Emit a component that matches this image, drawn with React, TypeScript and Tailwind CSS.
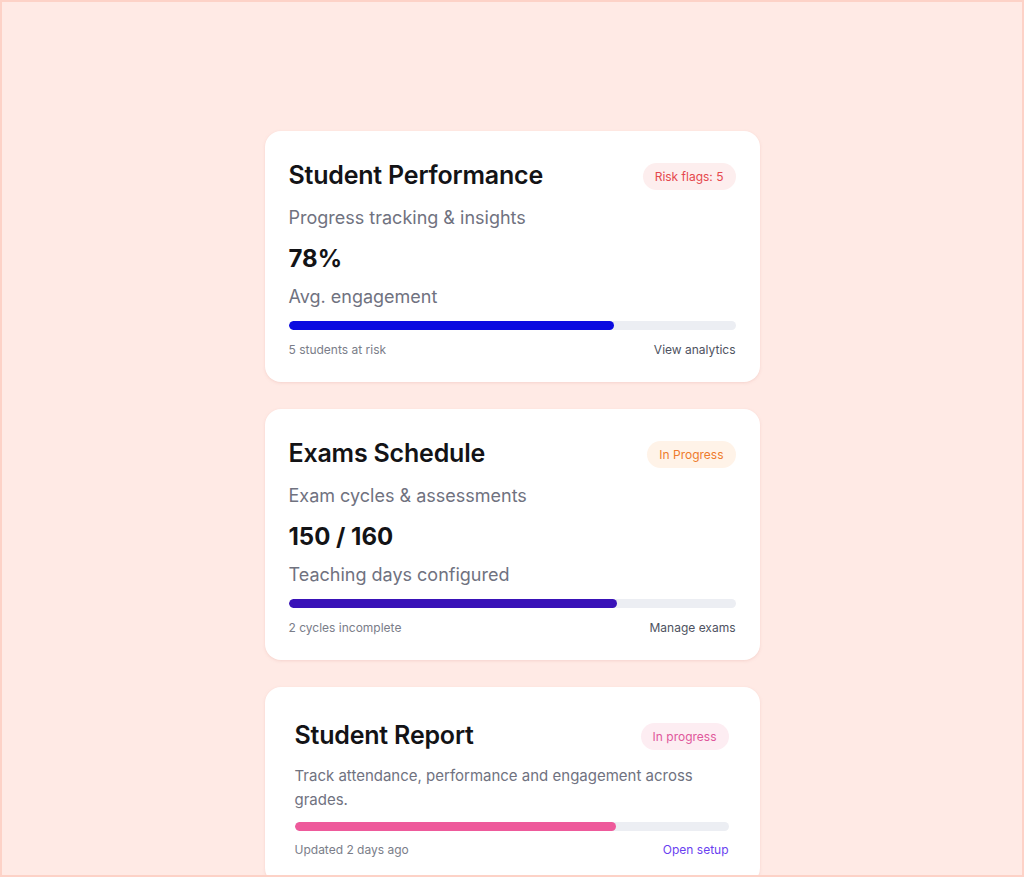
const StatusPill = ({label, tone}: {label: string; tone: string}) => (
    <span className={`h-[27px] px-3 rounded-full text-[12px] leading-[27px] whitespace-nowrap ${tone}`}>
        {label}
    </span>
);

const Bar = ({pct, fill}: {pct: number; fill: string}) => (
    <div className="h-[9px] w-full rounded-full bg-[#eceef3] overflow-hidden">
        <div className={`h-full rounded-full ${fill}`} style={{width: `${pct}%`}}/>
    </div>
);

const MetricCard = ({
                        title,
                        badge,
                        badgeTone,
                        subtitle,
                        value,
                        caption,
                        pct,
                        fill,
                        footLeft,
                        footRight,
                    }: {
    title: string;
    badge: string;
    badgeTone: string;
    subtitle: string;
    value: string;
    caption: string;
    pct: number;
    fill: string;
    footLeft: string;
    footRight: string;
}) => (
    <div className="w-[495px] rounded-2xl bg-white px-6 pt-[25px] pb-[22px] shadow-[0_1px_3px_rgba(226,170,160,0.35)]">
        <div className="flex h-10 items-center justify-between">
            <h2 className="text-[25px] font-semibold text-[#131316] tracking-[-0.2px]">{title}</h2>
            <StatusPill label={badge} tone={badgeTone}/>
        </div>
        <div className="mt-2 text-[18px] leading-7 text-[#70727f]">{subtitle}</div>
        <div className="mt-[11px] text-[24px] leading-8 font-bold text-[#131316]">{value}</div>
        <div className="mt-2 text-[18px] leading-7 text-[#70727f]">{caption}</div>
        <div className="mt-[10px]">
            <Bar pct={72.8 === pct ? pct : pct} fill={fill}/>
        </div>
        <div className="mt-[10px] flex justify-between text-[12px] leading-5">
            <span className="text-[#7a7d89]">{footLeft}</span>
            <span className="text-[#4e5261]">{footRight}</span>
        </div>
    </div>
);

export default function App() {
    return (
        <div
            className="h-[877px] w-full overflow-hidden border-2 border-[#fdd2c7] bg-[#ffeae5] flex flex-col items-center gap-[27px] pt-[129px]"
            style={{fontFamily: "Inter, 'Noto Sans', sans-serif"}}
        >
            <MetricCard
                title="Student Performance"
                badge="Risk flags: 5"
                badgeTone="bg-[#fdeeee] text-[#e5484d]"
                subtitle="Progress tracking & insights"
                value="78%"
                caption="Avg. engagement"
                pct={72.8}
                fill="bg-[#0b0be0]"
                footLeft="5 students at risk"
                footRight="View analytics"
            />
            <MetricCard
                title="Exams Schedule"
                badge="In Progress"
                badgeTone="bg-[#fff3e8] text-[#ee7b2c]"
                subtitle="Exam cycles & assessments"
                value="150 / 160"
                caption="Teaching days configured"
                pct={73.4}
                fill="bg-[#3912b8]"
                footLeft="2 cycles incomplete"
                footRight="Manage exams"
            />
            <div className="w-[495px] shrink-0 rounded-2xl bg-white pl-[30px] pr-[31px] pt-[29px] pb-6 shadow-[0_1px_3px_rgba(226,170,160,0.35)]">
                <div className="flex h-10 items-center justify-between">
                    <h2 className="text-[25px] font-semibold text-[#131316] tracking-[-0.2px]">Student Report</h2>
                    <StatusPill label="In progress" tone="bg-[#fdedf2] text-[#e0579b]"/>
                </div>
                <p className="mt-2 text-[15px] leading-6 text-[#70727f]">
                    Track attendance, performance and engagement across grades.
                </p>
                <div className="mt-[10px]">
                    <Bar pct={74.1} fill="bg-[#ee5a9b]"/>
                </div>
                <div className="mt-[9px] flex justify-between text-[12px] leading-5">
                    <span className="text-[#7a7d89]">Updated 2 days ago</span>
                    <span className="text-[#6a3ff0]">Open setup</span>
                </div>
            </div>
        </div>
    );
}
